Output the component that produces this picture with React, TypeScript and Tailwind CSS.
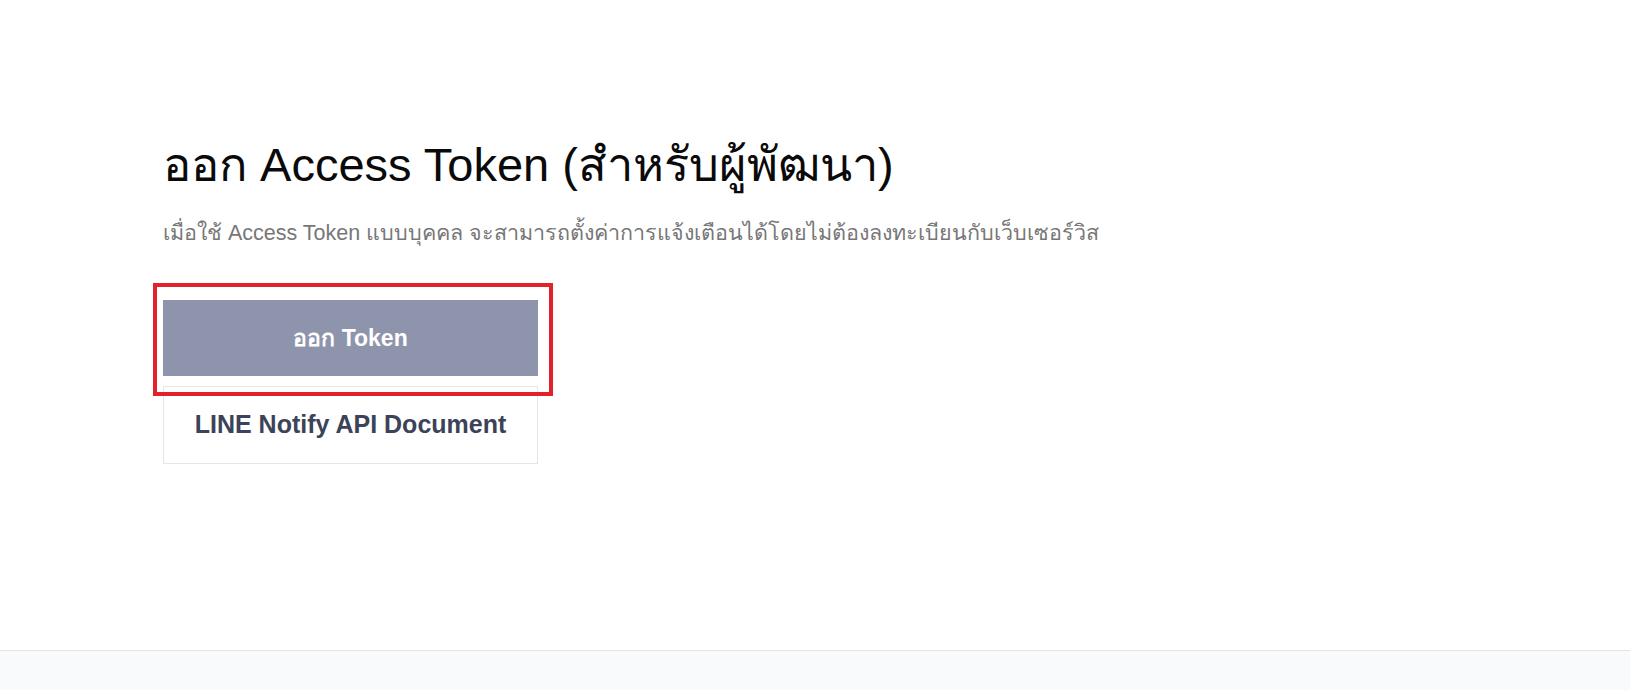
export default function App() {
  return (
    <div className="min-h-screen bg-white flex flex-col font-['Liberation_Sans','Noto_Sans',sans-serif]">
      <main className="h-[650px] pl-[163px] pt-[137px]">
        <h1 className="text-[47px] leading-[1.2] text-[#0a0a0a]">ออก Access Token (สำหรับผู้พัฒนา)</h1>
        <p className="mt-[28px] text-[21.5px] leading-[1.2] text-[#777]">
          เมื่อใช้ Access Token แบบบุคคล จะสามารถตั้งค่าการแจ้งเตือนได้โดยไม่ต้องลงทะเบียนกับเว็บเซอร์วิส
        </p>
        <div className="mt-[53px] flex w-[375px] flex-col gap-[10px]">
          <div className="relative">
            <button className="flex h-[76px] w-full items-center justify-center bg-[#8f94ad] text-[23px] font-bold text-white">
              ออก Token
            </button>
            <div className="pointer-events-none absolute -left-[10px] -top-[17px] h-[113px] w-[400px] border-4 border-[#e3212b]"></div>
          </div>
          <button className="flex h-[78px] w-full items-center justify-center border border-[#e6e6e6] bg-white text-[25px] font-bold text-[#3c4358]">
            LINE Notify API Document
          </button>
        </div>
      </main>
      <footer className="h-10 flex-1 border-t border-[#e4e4e4] bg-[#f9fafb]"></footer>
    </div>
  );
}
